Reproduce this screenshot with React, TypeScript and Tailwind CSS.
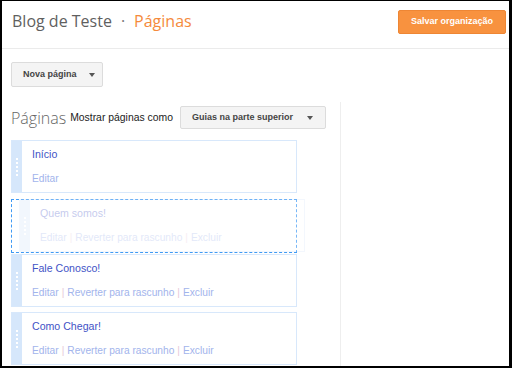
import React from "react";

const Arrow = () => (
  <span className="inline-block w-0 h-0 border-l-[3.5px] border-r-[3.5px] border-t-[4px] border-l-transparent border-r-transparent border-t-[#555]" />
);

const Grip = () => (
  <div className="w-[10px] bg-[#d6e7fb] flex flex-col items-center justify-center gap-[2px] shrink-0">
    {[0, 1, 2, 3, 4].map((i) => (
      <span key={i} className="block w-[2px] h-[2px] bg-white" />
    ))}
  </div>
);

const Sep = () => <span className="text-[#e6c9d8] mx-[3px]">|</span>;

function Card({ title, full }: { title: string; full: boolean }) {
  return (
    <div className="flex w-[286px] h-[53px] border border-[#d8e8fb] bg-white">
      <Grip />
      <div className="pl-[10px] pt-[7px] pb-[7px] flex flex-col gap-[11px] leading-[13px] font-['Liberation_Sans',Arial,sans-serif]">
        <div className="text-[#3f53c6] text-[10.6px]">{title}</div>
        <div className="text-[#a2b4ec] whitespace-nowrap text-[10.2px]">
          Editar
          {full && (
            <>
              <Sep />
              Reverter para rascunho
              <Sep />
              Excluir
            </>
          )}
        </div>
      </div>
    </div>
  );
}

export default function App() {
  return (
    <div className="w-[512px] h-[368px] bg-white border-l-2 border-t border-r-[3px] border-b-2 border-black overflow-hidden flex flex-col">
      <div className="h-[48px] shrink-0 border-b border-[#ebebeb] flex items-start justify-between pt-[9px] pl-[10px] pr-[3px]">
        <div className="flex items-baseline font-['Open_Sans',sans-serif] text-[16px] leading-[22px]">
          <span className="text-[#5f5f5f]">Blog de Teste</span>
          <span className="text-[#777] mx-[9px]">·</span>
          <span className="text-[#f58a3c]">Páginas</span>
        </div>
        <button className="w-[108px] h-[24px] rounded-[2px] bg-[#f8923f] border border-[#ee8634] text-white text-[9px] font-bold font-['Liberation_Sans',Arial,sans-serif]">
          Salvar organização
        </button>
      </div>

      <div className="pl-[9px] pt-[13px]">
        <button className="w-[92px] h-[25px] rounded-[2px] bg-[#f4f4f4] border border-[#dcdcdc] flex items-center pl-[11px] gap-[12px] text-[#444] text-[9px] font-bold font-['Liberation_Sans',Arial,sans-serif]">
          Nova página
          <Arrow />
        </button>
      </div>

      <div className="flex flex-1 mt-[15px]">
        <div className="w-[338px] shrink-0 pl-[9px] pt-[4px]">
          <div className="flex items-center h-[23px]">
            <span className="font-['Open_Sans',sans-serif] font-light text-[16px] text-[#666] leading-[22px]">Páginas</span>
            <span className="ml-[4px] text-[10.4px] text-[#222] font-['Liberation_Sans',Arial,sans-serif]">Mostrar páginas como</span>
            <button className="ml-[7px] w-[146px] h-[23px] rounded-[2px] bg-[#f4f4f4] border border-[#dcdcdc] flex items-center pl-[11px] gap-[14px] text-[#444] text-[9px] font-bold font-['Liberation_Sans',Arial,sans-serif]">
              Guias na parte superior
              <Arrow />
            </button>
          </div>

          <div className="mt-[11px] flex flex-col">
            <Card title="Início" full={false} />
            <div className="relative mt-[6px] w-[286px] h-[54px] border border-dashed border-[#3f9af4]">
              <div className="absolute left-[7px] top-[-1px] opacity-30">
                <Card title="Quem somos!" full={true} />
              </div>
            </div>
            <div className="mt-[1px]">
              <Card title="Fale Conosco!" full={true} />
            </div>
            <div className="mt-[5px]">
              <Card title="Como Chegar!" full={true} />
            </div>
          </div>
        </div>
        <div className="flex-1 border-l border-[#eeeeee]" />
      </div>
    </div>
  );
}
